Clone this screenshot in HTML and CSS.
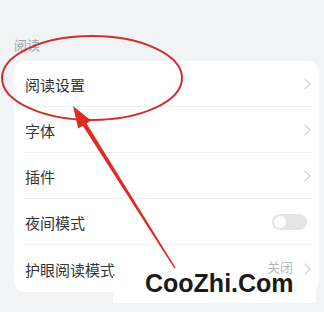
FILE: index.html
```html
<!DOCTYPE html>
<html lang="zh">
<head>
<meta charset="utf-8">
<link rel="stylesheet" href="styles.css">
</head>
<body>
<div class="page">
  <div class="section-label">阅读</div>
  <div class="card">
    <div class="row"><span class="title">阅读设置</span><span class="chev"></span></div>
    <div class="row"><span class="title">字体</span><span class="chev"></span></div>
    <div class="row"><span class="title">插件</span><span class="chev"></span></div>
    <div class="row"><span class="title">夜间模式</span><span class="toggle"><span class="knob"></span></span></div>
    <div class="row"><span class="title">护眼阅读模式</span><span class="value">关闭</span><span class="chev"></span></div>
  </div>
</div>
<svg class="annot" width="324" height="312" viewBox="0 0 324 312">
  <ellipse cx="92" cy="78" rx="90" ry="42" fill="none" stroke="#cf2f2a" stroke-width="2"/>
  <polygon points="73,106 91,120.6 86.6,123.6 175.6,267.8 174.4,268.4 82.8,125.8 78.2,128.6" fill="#e02a24"/>
</svg>
<div class="watermark"><span class="wm-text">CooZhi.Com</span></div>
</body>
</html>
```

FILE: styles.css
```css
html, body {
  margin: 0;
  padding: 0;
}
body {
  width: 324px;
  height: 312px;
  overflow: hidden;
  background: #f2f3f5;
  font-family: "Noto Sans CJK SC", "Noto Sans", sans-serif;
  position: relative;
}
.page {
  padding: 36px 5px 0 14px;
}
.section-label {
  font-size: 13px;
  line-height: 18px;
  color: #a0a3a8;
  margin-bottom: 7px;
}
.card {
  background: #fff;
  border-radius: 10px;
  padding: 0 7px 0 11px;
}
.row {
  height: 46px;
  display: flex;
  align-items: center;
  border-bottom: 1px solid #eeeff1;
  box-sizing: border-box;
}
.row:last-child {
  border-bottom: none;
  height: 47px;
}
.title {
  flex: 1;
  font-size: 15px;
  color: #333;
  padding-top: 2px;
}
.chev {
  width: 7px;
  height: 7px;
  border-top: 1.5px solid #c9cbcf;
  border-right: 1.5px solid #c9cbcf;
  transform: rotate(45deg);
  margin-right: 3px;
}
.value {
  font-size: 13px;
  line-height: 13px;
  color: #b4b6ba;
  margin-right: 8px;
  margin-top: -4px;
}
.toggle {
  width: 35px;
  height: 16px;
  border-radius: 8px;
  background: #e3e4e6;
  display: flex;
  align-items: center;
  padding: 0 2px;
  box-sizing: border-box;
  margin-right: 5px;
}
.knob {
  width: 12px;
  height: 12px;
  border-radius: 50%;
  background: #fff;
}
.annot {
  position: absolute;
  left: 0;
  top: 0;
}
.watermark {
  position: absolute;
  left: 113px;
  top: 276px;
  width: 203px;
  height: 27px;
  background: #fff;
}
.wm-text {
  position: absolute;
  left: 32px;
  top: -3px;
  font-family: "Liberation Sans", Arial, sans-serif;
  font-weight: bold;
  font-size: 25px;
  line-height: 20px;
  color: #1a1a1a;
}
```
